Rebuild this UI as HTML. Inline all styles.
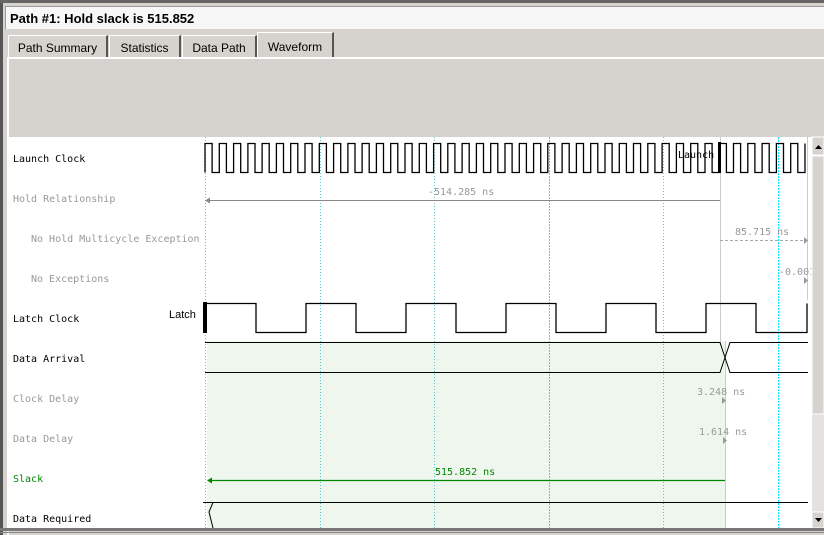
<!DOCTYPE html>
<html><head><meta charset="utf-8"><style>
body{margin:0;width:824px;height:535px;overflow:hidden;background:#d6d3ce;font-family:"Liberation Sans",sans-serif;position:relative}
.tab{position:absolute;top:35px;height:22px;border:1px solid #fff;border-right:2px solid #555;border-bottom:none;font-size:12px;line-height:24px;text-align:center;background:#d6d3ce;box-sizing:border-box}
</style></head><body>
<div style="position:absolute;left:0;top:0;width:824px;height:3px;background:#666"></div>
<div style="position:absolute;left:0;top:3px;width:3px;height:532px;background:#555"></div>
<div style="position:absolute;left:5px;top:6px;width:819px;height:23px;background:#f7f7f7;border-top:1px solid #999;border-left:1px solid #999;box-sizing:border-box;font-weight:bold;font-size:13px;line-height:24px;padding-left:4px">Path #1: Hold slack is 515.852</div>
<div class="tab" style="left:8px;width:100px">Path Summary</div>
<div class="tab" style="left:109px;width:72px">Statistics</div>
<div class="tab" style="left:182px;width:75px">Data Path</div>
<div class="tab" style="left:257px;width:77px;top:32px;height:26px;line-height:28px">Waveform</div>
<div style="position:absolute;left:7px;top:57px;width:817px;height:2px;background:#fff"></div>
<div style="position:absolute;left:7px;top:59px;width:2px;height:476px;background:#fff"></div>
<svg width="824" height="535" style="position:absolute;left:0;top:0" font-family="DejaVu Sans Mono, Liberation Mono, monospace" font-size="10">
<rect x="9" y="137" width="803" height="391" fill="#fff"/>
<rect x="207" y="341" width="518" height="187" fill="#eff6ee"/>
<g stroke-width="1">
<line x1="205.5" y1="137" x2="205.5" y2="528" stroke="#5cc" stroke-dasharray="1,2"/>
<line x1="320.5" y1="137" x2="320.5" y2="528" stroke="#5cc" stroke-dasharray="1,2"/>
<line x1="434.5" y1="137" x2="434.5" y2="528" stroke="#5cc" stroke-dasharray="1,2"/>
<line x1="549.5" y1="137" x2="549.5" y2="528" stroke="#0ef" stroke-dasharray="2,1"/>
<line x1="663.5" y1="137" x2="663.5" y2="528" stroke="#5cc" stroke-dasharray="1,2"/>
<line x1="778.5" y1="137" x2="778.5" y2="528" stroke="#0ef" stroke-dasharray="2,1"/>
<line x1="720.5" y1="137" x2="720.5" y2="345" stroke="#ccc"/>
<line x1="807.5" y1="137" x2="807.5" y2="300" stroke="#ccc"/>
<line x1="725.5" y1="341" x2="725.5" y2="528" stroke="#b8d8b8"/>
</g>
<path id="lc" fill="none" stroke="#000" stroke-width="1.3"/>
<rect x="718" y="142" width="3" height="31" fill="#000"/>
<text x="678" y="158" font-size="10">Launch</text>
<path d="M204 303.5H256V332.5H306V303.5H356V332.5H406V303.5H456V332.5H506V303.5H556V332.5H606V303.5H656V332.5H706V303.5H756V332.5H807V303.5" fill="none" stroke="#000" stroke-width="1.3"/>
<rect x="203" y="302" width="4" height="31" fill="#000"/>
<text x="169" y="318" font-size="11" font-family="Liberation Sans, sans-serif">Latch</text>
<g fill="#888" stroke="#888">
<line x1="206" y1="200.5" x2="720" y2="200.5"/>
<path d="M205 200.5l5-3v6z" stroke="none"/>
<line x1="720" y1="240.5" x2="804" y2="240.5" stroke-dasharray="3,2" stroke="#aaa"/>
<path d="M804 237v7l4-3.5z" stroke="none" fill="#999"/>
<path d="M804 277v7l4-3.5z" stroke="none" fill="#999"/>
<path d="M722 397v7l4-3.5z" stroke="none" fill="#999"/>
<path d="M723 437v7l4-3.5z" stroke="none" fill="#999"/>
</g>
<g fill="#999">
<text x="428" y="195">-514.285 ns</text>
<text x="735" y="235">85.715 ns</text>
<text x="779" y="275">-0.001</text>
<text x="697" y="395">3.248 ns</text>
<text x="699" y="435">1.614 ns</text>
</g>
<path d="M205 342.5H720L730 372.5H808M205 372.5H720L730 342.5H808" fill="none" stroke="#000" stroke-width="1"/>
<line x1="210" y1="480.5" x2="725" y2="480.5" stroke="#080" stroke-width="1.3"/>
<path d="M207 480.5l5-3v6z" fill="#080"/>
<text x="435" y="475" fill="#080">515.852 ns</text>
<path d="M203 502.5H808M213 502.5L209 512L213 528" fill="none" stroke="#000" stroke-width="1"/>
<g fill="#000">
<text x="13" y="162">Launch Clock</text>
<text x="13" y="202" fill="#999">Hold Relationship</text>
<text x="31" y="242" fill="#999">No Hold Multicycle Exception</text>
<text x="31" y="282" fill="#999">No Exceptions</text>
<text x="13" y="322">Latch Clock</text>
<text x="13" y="362">Data Arrival</text>
<text x="13" y="402" fill="#999">Clock Delay</text>
<text x="13" y="442" fill="#999">Data Delay</text>
<text x="13" y="482" fill="#080">Slack</text>
<text x="13" y="522">Data Required</text>
</g>
<rect x="812" y="137" width="12" height="391" fill="#e4e2de"/>
<rect x="812" y="137" width="12" height="18" fill="#d6d3ce" stroke="#fff"/>
<path d="M815 149h7l-3.5-4z" fill="#000"/>
<rect x="812" y="156" width="12" height="258" fill="#d6d3ce" stroke="#fff"/>
<rect x="812" y="512" width="12" height="16" fill="#d6d3ce" stroke="#fff"/>
<path d="M815 518h7l-3.5 4z" fill="#000"/>
<rect x="0" y="528" width="824" height="3" fill="#777"/>
<rect x="0" y="532" width="824" height="1" fill="#888"/>
</svg>
<script>
var d="M205 172.5V143.5";var p=14.285;
for(var i=0;i<42;i++){var x=205+i*p;var h=x+7.1,e=x+p;if(h>808)break;d+="H"+h.toFixed(1)+"V172.5";if(e>808){d+="H808";break;}d+="H"+e.toFixed(1)+"V143.5";}
document.getElementById("lc").setAttribute("d",d);
</script>
</body></html>
